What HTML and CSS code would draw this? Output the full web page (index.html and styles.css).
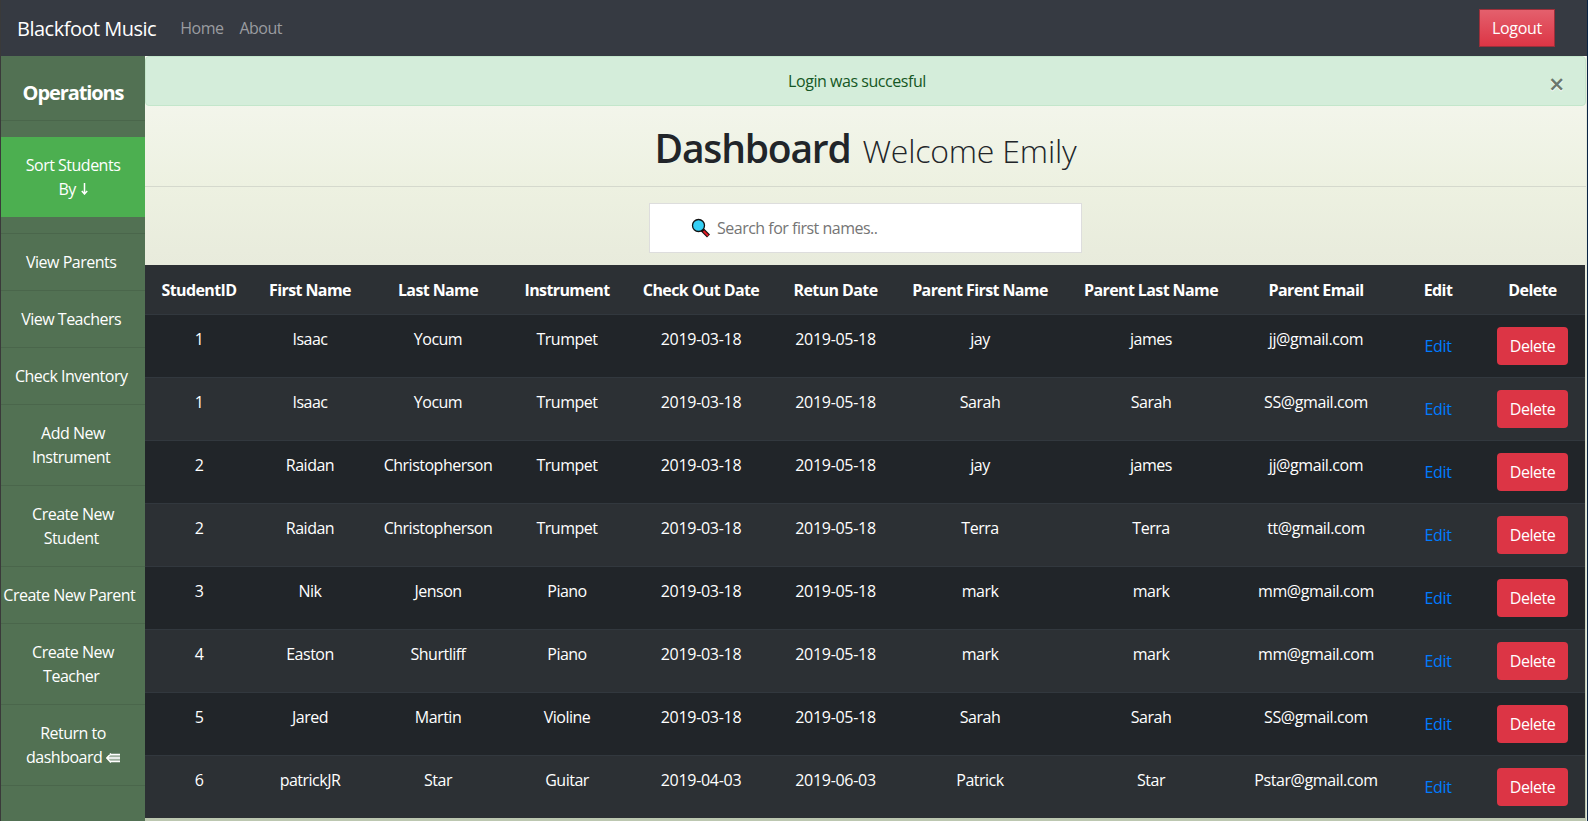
FILE: index.html
```html
<!DOCTYPE html>
<html lang="en">
<head>
<meta charset="utf-8">
<title>Blackfoot Music</title>
<link rel="stylesheet" href="styles.css">
</head>
<body>
<div class="page">
<nav class="navbar">
  <a class="brand">Blackfoot Music</a>
  <a class="nav-link">Home</a>
  <a class="nav-link">About</a>
  <button class="logout">Logout</button>
</nav>
<div class="body">
  <aside class="sidebar">
    <h5 class="side-title">Operations</h5>
    <div class="side-item sort">Sort Students<br>By <svg class="arrow-down" viewBox="0 0 7 12"><path d="M3.500 0V10.500M.8 8 3.500 11 6.200 8" fill="none" stroke="#fff" stroke-width="1.500"/></svg></div>
    <div class="side-item first">View Parents&nbsp;</div>
    <div class="side-item">View Teachers&nbsp;</div>
    <div class="side-item">Check Inventory&nbsp;</div>
    <div class="side-item">Add New<br>Instrument&nbsp;</div>
    <div class="side-item">Create New<br>Student&nbsp;</div>
    <div class="side-item">Create New Parent&nbsp;&nbsp;</div>
    <div class="side-item">Create New<br>Teacher&nbsp;</div>
    <div class="side-item">Return to<br>dashboard <svg class="arrow-left" viewBox="0 0 14 10"><path d="M5 1H14V9H5L.5 5Z" fill="#fff" fill-opacity=".45"/><path d="M5 .5.800 5 5 9.500M3.500 1.500H14M1 5H14M3.500 8.500H14" fill="none" stroke="#fff" stroke-width="1.500"/></svg></div>
    <div class="side-item end"></div>
  </aside>
  <main class="main">
    <div class="alert"><span>Login was succesful</span><button class="close">×</button></div>
    <h1 class="title">Dashboard <small>Welcome Emily</small></h1>
    <div class="search">
      <svg class="glass" viewBox="0 0 20 20"><path d="M11 11.500 17.500 18" stroke="#111" stroke-width="4.200"/><path d="M12.500 13 17.200 17.700" stroke="#e01b24" stroke-width="2"/><circle cx="7.500" cy="7.500" r="6" fill="#35d0f5" stroke="#111" stroke-width="1.300"/></svg>
      <span>Search for first names..</span>
    </div>
    <table class="students">
      <colgroup><col class="w1"><col class="w2"><col class="w3"><col class="w4"><col class="w5"><col class="w6"><col class="w7"><col class="w8"><col class="w9"><col class="w10"><col class="w11"></colgroup>
      <thead><tr><th>StudentID</th><th>First Name</th><th>Last Name</th><th>Instrument</th><th>Check Out Date</th><th>Retun Date</th><th>Parent First Name</th><th>Parent Last Name</th><th>Parent Email</th><th>Edit</th><th>Delete</th></tr></thead>
      <tbody>
      <tr><td>1</td><td>Isaac</td><td>Yocum</td><td>Trumpet</td><td class="date">2019-03-18</td><td class="date">2019-05-18</td><td>jay</td><td>james</td><td class="mail">jj@gmail.com</td><td><a class="edit">Edit</a></td><td><button class="del">Delete</button></td></tr>
      <tr><td>1</td><td>Isaac</td><td>Yocum</td><td>Trumpet</td><td class="date">2019-03-18</td><td class="date">2019-05-18</td><td>Sarah</td><td>Sarah</td><td class="mail">SS@gmail.com</td><td><a class="edit">Edit</a></td><td><button class="del">Delete</button></td></tr>
      <tr><td>2</td><td>Raidan</td><td>Christopherson</td><td>Trumpet</td><td class="date">2019-03-18</td><td class="date">2019-05-18</td><td>jay</td><td>james</td><td class="mail">jj@gmail.com</td><td><a class="edit">Edit</a></td><td><button class="del">Delete</button></td></tr>
      <tr><td>2</td><td>Raidan</td><td>Christopherson</td><td>Trumpet</td><td class="date">2019-03-18</td><td class="date">2019-05-18</td><td>Terra</td><td>Terra</td><td class="mail">tt@gmail.com</td><td><a class="edit">Edit</a></td><td><button class="del">Delete</button></td></tr>
      <tr><td>3</td><td>Nik</td><td>Jenson</td><td>Piano</td><td class="date">2019-03-18</td><td class="date">2019-05-18</td><td>mark</td><td>mark</td><td class="mail">mm@gmail.com</td><td><a class="edit">Edit</a></td><td><button class="del">Delete</button></td></tr>
      <tr><td>4</td><td>Easton</td><td>Shurtliff</td><td>Piano</td><td class="date">2019-03-18</td><td class="date">2019-05-18</td><td>mark</td><td>mark</td><td class="mail">mm@gmail.com</td><td><a class="edit">Edit</a></td><td><button class="del">Delete</button></td></tr>
      <tr><td>5</td><td>Jared</td><td>Martin</td><td>Violine</td><td class="date">2019-03-18</td><td class="date">2019-05-18</td><td>Sarah</td><td>Sarah</td><td class="mail">SS@gmail.com</td><td><a class="edit">Edit</a></td><td><button class="del">Delete</button></td></tr>
      <tr><td>6</td><td>patrickJR</td><td>Star</td><td>Guitar</td><td class="date">2019-04-03</td><td class="date">2019-06-03</td><td>Patrick</td><td>Star</td><td class="mail">Pstar@gmail.com</td><td><a class="edit">Edit</a></td><td><button class="del">Delete</button></td></tr>
      </tbody>
    </table>
  </main>
</div>
</div>
</body>
</html>
```

FILE: styles.css
```css
* { box-sizing: border-box; }
body {
  margin: 0;
  height: 821px;
  overflow: hidden;
  background: #3a3a3a;
  font: 16px/24px "Open Sans", "Noto Sans", sans-serif;
  letter-spacing: -0.5px;
}
button { font: inherit; letter-spacing: inherit; }
.page {
  height: 821px;
  margin-left: 1px;
  border-right: 1px solid #0b2545;
}
.navbar {
  height: 56px;
  background: #363a42;
  display: flex;
  align-items: center;
  padding: 0 32px 0 16px;
  color: #fff;
}
.brand { font-size: 20px; margin-right: 24px; padding-top: 1px; }
.nav-link { color: #9a9ca0; margin-right: 16px; }
.logout {
  margin: 0 0 0 auto;
  width: 76px;
  height: 38px;
  padding: 0;
  color: #fff;
  letter-spacing: -0.3px;
  border: 1px solid #9c2f3a;
  background: linear-gradient(#e4606d, #dc3545);
}
.body { display: flex; height: 765px; }
.sidebar {
  width: 144px;
  flex: none;
  background: #527153;
  color: #fff;
  text-align: center;
}
.side-title {
  margin: 0 0 16px;
  height: 65px;
  padding-top: 25px;
  border-bottom: 1px solid #4a664b;
  font-size: 20px;
  font-weight: 700;
  letter-spacing: -1.1px;
}
.side-item {
  border-top: 1px solid #4a664b;
  padding: 16px 0;
  white-space: nowrap;
}
.side-item.sort { background: #4caf50; border: 0; margin-bottom: 16px; }
.arrow-down { width: 7px; height: 12px; margin-left: 1px; }
.arrow-left { width: 14px; height: 10px; }
.main {
  flex: 1;
  min-width: 0;
  border-right: 1px solid #e4e8da;
  background: linear-gradient(#f6f8f1, #edf1e1 130px, #e8ebdc 209px, #bcc7b0);
}
.alert {
  height: 50px;
  display: flex;
  justify-content: center;
  padding: 12px 45px 0 28px;
  border: 1px solid #c3e6cb;
  border-radius: 4px;
  background: #d4edda;
  color: #155724;
  letter-spacing: -0.45px;
  position: relative;
}
.close {
  position: absolute;
  right: 21px;
  top: 13px;
  padding: 0;
  border: 0;
  background: none;
  font-size: 27px;
  font-weight: 600;
  line-height: 28px;
  color: #6a776d;
  text-shadow: 0 1px 0 #fff;
}
.title {
  margin: 0 0 16px;
  height: 81px;
  padding-top: 18px;
  border-bottom: 1px solid #d5d9cd;
  text-align: center;
  font-size: 39px;
  line-height: 48px;
  font-weight: 600;
  letter-spacing: -1.2px;
  color: #212529;
}
.title small {
  margin-left: 3px;
  font-size: 32px;
  font-weight: 300;
  letter-spacing: -0.2px;
}
.search {
  width: 433px;
  height: 50px;
  margin: 0 auto 12px;
  padding-left: 41px;
  display: flex;
  align-items: center;
  gap: 6px;
  border: 1px solid #ddd;
  background: #fff;
  color: #757575;
}
.glass { width: 20px; height: 20px; }
.students {
  width: 1440px;
  table-layout: fixed;
  border-collapse: separate;
  border-spacing: 0;
  background: #212529;
  color: #fff;
  text-align: center;
}
.w1 { width: 108px; }
.w2 { width: 114px; }
.w3 { width: 142px; }
.w4 { width: 116px; }
.w5 { width: 152px; }
.w6 { width: 117px; }
.w7 { width: 172px; }
.w8 { width: 170px; }
.w9 { width: 160px; }
.w10 { width: 84px; }
.w11 { width: 105px; }
.students th {
  height: 49px;
  padding: 1px 0 0;
  font-weight: 700;
  letter-spacing: -0.6px;
  white-space: nowrap;
  background: #2c3034;
}
.students td {
  height: 63px;
  padding: 12px 0 0;
  border-top: 1px solid #32383e;
  vertical-align: top;
}
.students .date { letter-spacing: -0.3px; }
.students .mail { letter-spacing: -0.4px; }
.students tr:nth-child(even) td { background: #2c3034; }
.edit { display: block; padding-top: 7px; letter-spacing: -0.3px; color: #007bff; }
.del {
  display: block;
  margin: 0 auto;
  width: 71px;
  height: 38px;
  padding: 0;
  border: 0;
  border-radius: 4px;
  background: #dc3545;
  color: #fff;
}
```
